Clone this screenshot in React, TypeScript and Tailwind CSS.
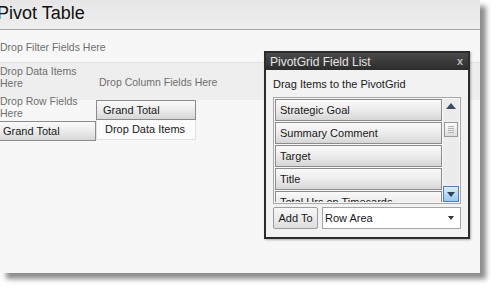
const fields = ['Strategic Goal', 'Summary Comment', 'Target', 'Title', 'Total Hrs on Timecards'];

const font = { fontFamily: '"Liberation Sans", Arial, sans-serif' };

function FieldButton({ label }: { label: string }) {
  return (
    <div className="h-[22px] shrink-0 border border-[#8c8c8c] bg-gradient-to-b from-[#fafafa] via-[#ececec] to-[#d6d6d6] px-[4px] leading-[20px] text-[11px] text-[#1a1a1a]">
      {label}
    </div>
  );
}

function FieldList() {
  return (
    <div className="absolute left-[264px] top-[51px] w-[206px] border-2 border-[#2b2b2b] bg-[#f2f2f2] shadow-[1px_1px_2px_rgba(0,0,0,0.3)]">
      <div className="flex h-[17px] items-center justify-between bg-gradient-to-b from-[#4a4a4a] to-[#2c2c2c] pl-[4px] pr-[5px] text-[12px] text-[#e6e6e6]">
        <span>PivotGrid Field List</span>
        <span className="text-[11px] font-bold text-[#bdbdbd]">x</span>
      </div>
      <div className="px-[7px] pt-[8px] pb-[8px]">
        <div className="text-[11px] text-[#1a1a1a] leading-[13px]">Drag Items to the PivotGrid</div>
        <div className="mt-[6px] flex h-[107px] border border-[#a9a9a9] bg-[#f7f7f7] p-[1px]">
          <div className="flex flex-1 flex-col gap-[1px] overflow-hidden">
            {fields.map((f) => (
              <FieldButton key={f} label={f} />
            ))}
          </div>
          <div className="ml-[1px] flex w-[16px] flex-col items-center bg-[#ececec]">
            <div className="mt-[4px] h-0 w-0 border-x-[5px] border-b-[6px] border-x-transparent border-b-[#3c4a66]" />
            <div className="mt-[13px] h-[15px] w-[14px] border border-[#9a9a9a] bg-gradient-to-b from-[#fdfdfd] to-[#dcdcdc] p-[3px]">
              <div className="h-full w-full bg-[repeating-linear-gradient(#b5b5b5_0_1px,transparent_1px_2px)]" />
            </div>
            <div className="flex-1" />
            <div className="flex h-[16px] w-[16px] items-center justify-center border border-[#4e80b5] bg-gradient-to-b from-[#d9ecfb] to-[#9cc8ee]">
              <div className="h-0 w-0 border-x-[4px] border-t-[5px] border-x-transparent border-t-[#2d3f60]" />
            </div>
          </div>
        </div>
        <div className="mt-[3px] flex gap-[4px]">
          <div className="h-[22px] w-[45px] rounded-[2px] border border-[#9d9d9d] bg-gradient-to-b from-[#f8f8f8] to-[#dedede] text-center leading-[20px] text-[11px] text-[#1a1a1a]">
            Add To
          </div>
          <div className="flex h-[22px] flex-1 items-center justify-between border border-[#a5a5a5] bg-white pl-[2px] pr-[6px] text-[11px] text-[#1a1a1a]">
            <span>Row Area</span>
            <div className="h-0 w-0 border-x-[3px] border-t-[4px] border-x-transparent border-t-[#333]" />
          </div>
        </div>
      </div>
    </div>
  );
}

export default function App() {
  return (
    <div className="h-[291px] w-[497px] bg-white" style={font}>
      <div className="relative h-[273px] w-[480px] overflow-hidden bg-[#f7f7f7] shadow-[6px_6px_5px_rgba(0,0,0,0.45)]">
        <div className="h-[30px] border-b border-[#a3a3a3] bg-gradient-to-b from-[#e6e6e6] to-[#efefef]">
          <div className="-ml-[3px] pt-[1px] text-[18px] leading-[24px] text-[#111]">Pivot Table</div>
        </div>
        <div className="flex h-[33px] items-center border-b border-[#e0e0e0] pt-[3px] text-[10.5px] text-[#6f6f6f]">
          Drop Filter Fields Here
        </div>
        <div className="flex h-[37px] bg-[#eeeeee] text-[10.5px] text-[#6f6f6f]">
          <div className="w-[96px] pt-[2px] leading-[12px]">
            Drop Data Items
            <br />
            Here
          </div>
          <div className="pl-[3px] pt-[12px]">Drop Column Fields Here</div>
        </div>
        <div className="flex">
          <div className="w-[96px]">
            <div className="-mt-[5px] h-[23px] text-[10.5px] leading-[12px] text-[#6f6f6f]">
              Drop Row Fields
              <br />
              Here
            </div>
            <div className="mt-[3px] -ml-[2px] h-[20px] border border-[#8c8c8c] bg-gradient-to-b from-[#fafafa] via-[#ececec] to-[#d6d6d6] pl-[4px] leading-[18px] text-[11px] text-[#1a1a1a]">
              Grand Total
            </div>
          </div>
          <div className="w-[100px]">
            <div className="h-[20px] border border-[#8c8c8c] bg-gradient-to-b from-[#fafafa] via-[#ececec] to-[#d6d6d6] pl-[6px] leading-[18px] text-[11px] text-[#1a1a1a]">
              Grand Total
            </div>
            <div className="h-[20px] border-x border-b border-[#e3e3e3] bg-[#fbfbfb] pl-[8px] leading-[18px] text-[11px] text-[#1a1a1a]">
              Drop Data Items
            </div>
          </div>
        </div>
        <FieldList />
      </div>
    </div>
  );
}
